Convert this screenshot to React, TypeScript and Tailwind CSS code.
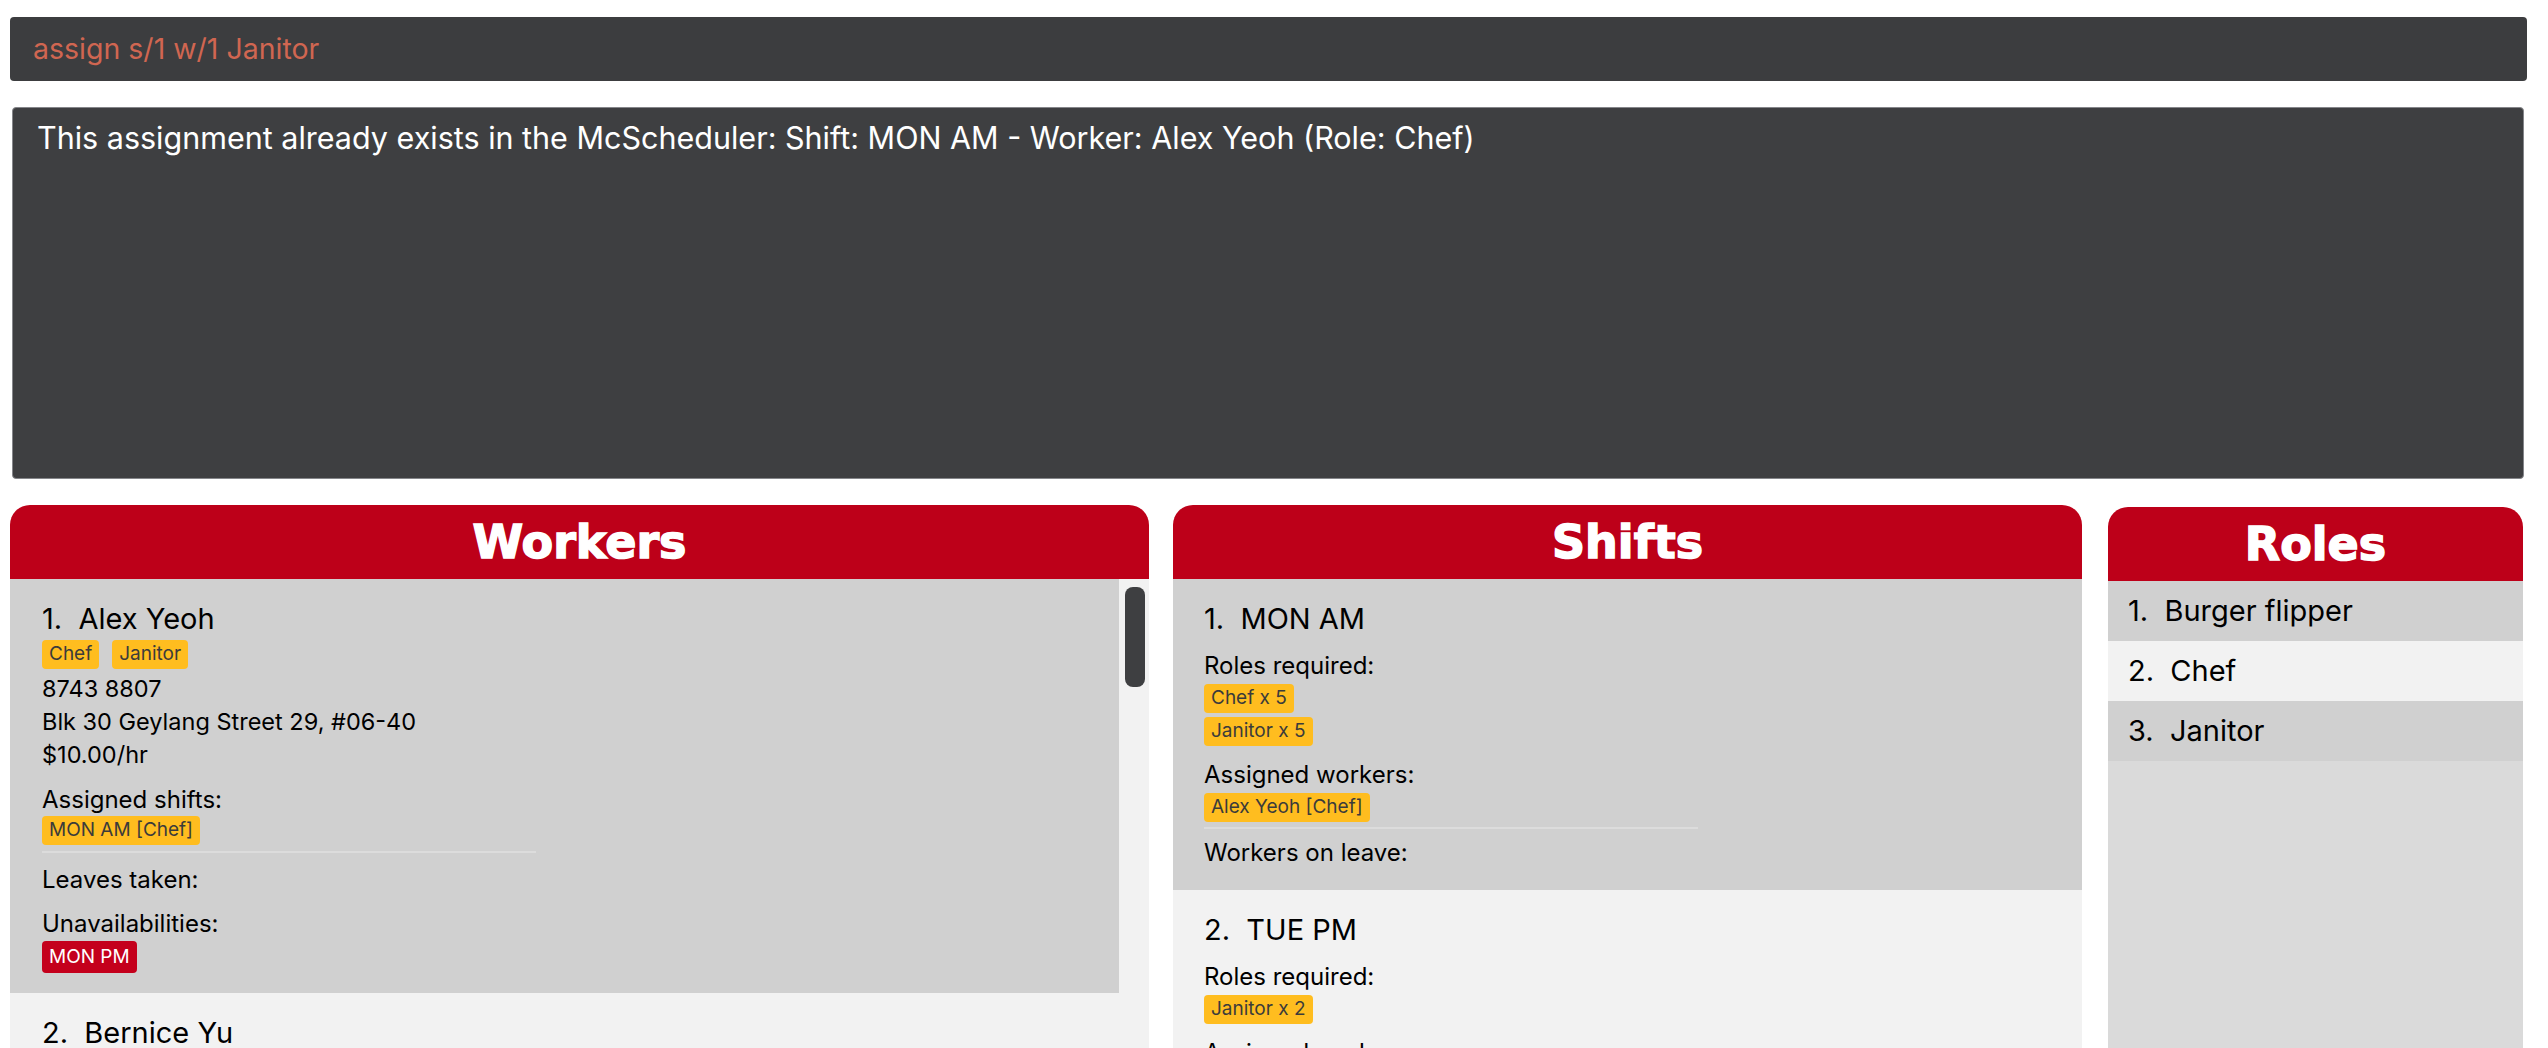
import React from 'react';

type Worker = {
  name: string;
  roles: string[];
  phone: string;
  address: string;
  pay: string;
  shifts: string[];
  leaves: string[];
  unavailable: string[];
};

type Shift = {
  slot: string;
  required: string[];
  assigned: string[];
  onLeave: string[];
};

const workers: Worker[] = [
  {
    name: 'Alex Yeoh',
    roles: ['Chef', 'Janitor'],
    phone: '8743 8807',
    address: 'Blk 30 Geylang Street 29, #06-40',
    pay: '$10.00/hr',
    shifts: ['MON AM [Chef]'],
    leaves: [],
    unavailable: ['MON PM'],
  },
  {
    name: 'Bernice Yu',
    roles: ['Janitor'],
    phone: '9927 2758',
    address: 'Blk 30 Lorong 3 Serangoon Gardens, #07-18',
    pay: '$9.50/hr',
    shifts: [],
    leaves: [],
    unavailable: [],
  },
];

const shifts: Shift[] = [
  { slot: 'MON AM', required: ['Chef x 5', 'Janitor x 5'], assigned: ['Alex Yeoh [Chef]'], onLeave: [] },
  { slot: 'TUE PM', required: ['Janitor x 2'], assigned: [], onLeave: [] },
];

const roles = ['Burger flipper', 'Chef', 'Janitor'];

function Tag({ label, danger }: { label: string; danger?: boolean }) {
  return (
    <span
      className={
        danger
          ? 'inline-flex h-[32px] items-center rounded-[4px] bg-[#c4001c] px-[7px] text-[19px] text-white'
          : 'inline-flex h-[29px] items-center rounded-[4px] bg-[#ffbd1f] px-[7px] text-[19px] text-[#3b3b3b]'
      }
    >
      {label}
    </span>
  );
}

function PanelHeader({ title }: { title: string }) {
  return (
    <div className="flex h-[74px] shrink-0 items-center justify-center rounded-t-[20px] bg-[#bd0019]">
      <span className="font-['DejaVu_Sans',sans-serif] text-[46px] font-bold leading-none text-white [-webkit-text-stroke:1.5px_white]">
        {title}
      </span>
    </div>
  );
}

function WorkerCard({ worker, index }: { worker: Worker; index: number }) {
  const bg = index % 2 === 0 ? 'bg-[#d0d0d0]' : 'bg-[#f2f2f2]';
  return (
    <div className={`${bg} pl-[32px] pt-[22px] pb-[20px]`}>
      <div className="whitespace-pre text-[29px] leading-[36px] text-black">{`${index + 1}.  ${worker.name}`}</div>
      <div className="mt-[3px] flex gap-[13px]">
        {worker.roles.map((r) => (
          <Tag key={r} label={r} />
        ))}
      </div>
      <div className="mt-[3px] text-[23.5px] leading-[33px] text-black">
        <div>{worker.phone}</div>
        <div>{worker.address}</div>
        <div>{worker.pay}</div>
      </div>
      <div className="mt-[12px] text-[24px] leading-[33px] text-black">Assigned shifts:</div>
      <div className="flex flex-col items-start gap-[4px]">
        {worker.shifts.map((s) => (
          <Tag key={s} label={s} />
        ))}
      </div>
      <div className="mt-[6px] h-[2px] w-[494px] bg-[#dcdcdc]" />
      <div className="mt-[10px] text-[24px] leading-[33px] text-black">Leaves taken:</div>
      <div className="mt-[11px] text-[24px] leading-[33px] text-black">Unavailabilities:</div>
      <div className="mt-[1px] flex gap-[8px]">
        {worker.unavailable.map((u) => (
          <Tag key={u} label={u} danger />
        ))}
      </div>
    </div>
  );
}

function ShiftCard({ shift, index }: { shift: Shift; index: number }) {
  const bg = index % 2 === 0 ? 'bg-[#d0d0d0]' : 'bg-[#f2f2f2]';
  return (
    <div className={`${bg} pl-[31px] pt-[22px] pb-[21px]`}>
      <div className="whitespace-pre text-[29px] leading-[36px] text-black">{`${index + 1}.  ${shift.slot}`}</div>
      <div className="mt-[12px] text-[24px] leading-[33px] text-black">Roles required:</div>
      <div className="mt-[2px] flex flex-col items-start gap-[4px]">
        {shift.required.map((r) => (
          <Tag key={r} label={r} />
        ))}
      </div>
      <div className="mt-[12px] text-[24px] leading-[33px] text-black">Assigned workers:</div>
      <div className="mt-[2px] flex flex-col items-start gap-[4px]">
        {shift.assigned.map((a) => (
          <Tag key={a} label={a} />
        ))}
      </div>
      <div className="mt-[5px] h-[2px] w-[494px] bg-[#dcdcdc]" />
      <div className="mt-[7px] text-[24px] leading-[33px] text-black">Workers on leave:</div>
    </div>
  );
}

export default function App() {
  return (
    <div className="h-[1048px] w-[2548px] overflow-hidden bg-white font-[Inter,'Liberation_Sans',sans-serif]">
      {/* Command box */}
      <div className="ml-[10px] mt-[17px] flex h-[64px] w-[2517px] items-center rounded-[4px] bg-[#3c3d3f] pl-[23px]">
        <span className="text-[28.5px] text-[#d06651]">assign s/1 w/1 Janitor</span>
      </div>

      {/* Result display */}
      <div className="ml-[12px] mt-[26px] h-[372px] w-[2512px] rounded-[4px] border border-[#85868a] bg-[#3e3f41] pl-[24px] pt-[8px]">
        <p className="text-[30.5px] leading-[44px] text-white">
          This assignment already exists in the McScheduler: Shift: MON AM - Worker: Alex Yeoh (Role: Chef)
        </p>
      </div>

      {/* Lists */}
      <div className="ml-[10px] mt-[26px] flex items-start">
        <div className="flex h-[600px] w-[1139px] flex-col">
          <PanelHeader title="Workers" />
          <div className="flex flex-1 bg-[#f2f2f2]">
            <div className="w-[1109px]">
              {workers.map((w, i) => (
                <WorkerCard key={w.name} worker={w} index={i} />
              ))}
            </div>
            <div className="flex-1 pl-[6px] pt-[8px]">
              <div className="h-[100px] w-[20px] rounded-[8px] bg-[#3e3f41]" />
            </div>
          </div>
        </div>

        <div className="ml-[24px] flex h-[600px] w-[909px] flex-col">
          <PanelHeader title="Shifts" />
          <div className="flex-1 bg-[#f2f2f2]">
            {shifts.map((s, i) => (
              <ShiftCard key={s.slot} shift={s} index={i} />
            ))}
          </div>
        </div>

        <div className="ml-[26px] mt-[2px] flex h-[600px] w-[415px] flex-col">
          <PanelHeader title="Roles" />
          <div className="flex-1 bg-[#dadada]">
            {roles.map((r, i) => (
              <div
                key={r}
                className={`flex h-[60px] items-center whitespace-pre pl-[20px] text-[29px] text-black ${
                  i % 2 === 0 ? 'bg-[#d0d0d0]' : 'bg-[#f2f2f2]'
                }`}
              >
                {`${i + 1}.  ${r}`}
              </div>
            ))}
          </div>
        </div>
      </div>
    </div>
  );
}
